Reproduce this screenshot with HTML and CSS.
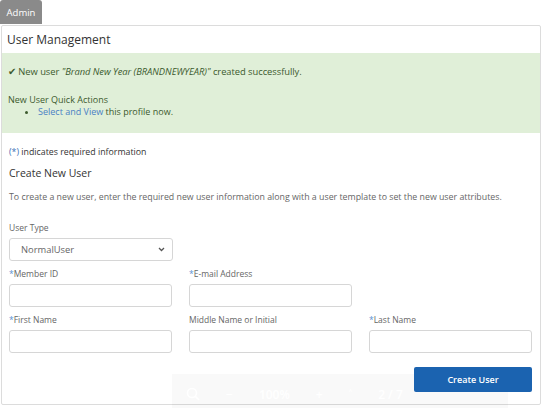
FILE: index.html
```html
<!DOCTYPE html>
<html>
<head>
<meta charset="utf-8">
<link rel="stylesheet" href="styles.css">
</head>
<body>
<div class="page">
  <div class="tab">Admin</div>
  <div class="panel">
    <div class="panel-head">User Management</div>
    <div class="alert">
      <p class="msg"><span class="check">&#10004;</span> New user <em>"Brand New Year (BRANDNEWYEAR)"</em> created successfully.</p>
      <p class="qa-title">New User Quick Actions</p>
      <ul class="qa-list">
        <li><a class="link">Select and View</a> this profile now.</li>
      </ul>
    </div>
    <div class="body">
      <p class="req"><span class="blue">(*)</span> indicates required information</p>
      <h2 class="sub">Create New User</h2>
      <p class="desc">To create a new user, enter the required new user information along with a user template to set the new user attributes.</p>
      <div class="field type-field">
        <label class="lbl">User Type</label>
        <div class="select"><span>NormalUser</span>
          <svg class="chev" width="7" height="5" viewBox="0 0 7 5"><path d="M1 1 L3.5 3.5 L6 1" fill="none" stroke="#555" stroke-width="1.3"/></svg>
        </div>
      </div>
      <div class="grid">
        <div class="field"><label class="lbl"><span class="star">*</span>Member ID</label><div class="input"></div></div>
        <div class="field"><label class="lbl"><span class="star">*</span>E-mail Address</label><div class="input"></div></div>
        <div></div>
        <div class="field"><label class="lbl"><span class="star">*</span>First Name</label><div class="input"></div></div>
        <div class="field"><label class="lbl">Middle Name or Initial</label><div class="input"></div></div>
        <div class="field"><label class="lbl"><span class="star">*</span>Last Name</label><div class="input"></div></div>
      </div>
      <div class="actions"><button class="btn">Create User</button></div>
    </div>
  </div>
  <div class="toolbar">
    <svg width="14" height="14" viewBox="0 0 14 14"><circle cx="6" cy="6" r="4.5" fill="none" stroke="#fff" stroke-width="1.6"/><path d="M9.5 9.5 L13 13" stroke="#fff" stroke-width="1.6"/></svg>
    <span>&minus;</span><span>100%</span><span>+</span><span>&#708;</span><span>2 / 7</span><span>&#709;</span>
  </div>
</div>
</body>
</html>
```
FILE: styles.css
```css
* { box-sizing: border-box; }
html, body { margin: 0; padding: 0; background: #fff; }
body { font-family: "Open Sans", "Noto Sans", sans-serif; color: #333; }
.page { position: relative; width: 545px; height: 408px; overflow: hidden; }
.tab {
  width: 42px; height: 24px;
  background: #8a8a8a; color: #fff;
  font-size: 9.5px; font-weight: 400;
  display: flex; align-items: center; justify-content: center;
  border-radius: 3px 3px 0 0;
}
.panel {
  margin: 1px 0 0 1px; width: 540px; height: 380px;
  border: 1px solid #dcdcdc; border-radius: 2px;
}
.panel-head {
  height: 27px; padding: 0 0 0 5px;
  display: flex; align-items: center;
  font-size: 12px; color: #333;
}
.alert {
  background: #e0efd8; height: 80px;
  padding: 12px 6px 0 6px; color: #3c5a2e;
  font-size: 9px;
}
.alert p { margin: 0; }
.msg { line-height: 12px; font-size: 9.4px; letter-spacing: -0.05px; }
.check { color: #3c5a2e; font-size: 10px; }
.qa-title { margin-top: 16px !important; line-height: 12px; }
.qa-list { margin: 0; padding-left: 30px; line-height: 12px; }
.link { color: #4a7fc4; }
.body { padding: 13px 8px 0 7px; font-size: 8.8px; }
.req { margin: 0; line-height: 12px; color: #333; }
.blue { color: #3b6fb6; }
.sub { margin: 9px 0 0; font-size: 10.5px; font-weight: 400; line-height: 13px; color: #333; }
.desc { margin: 11px 0 0; color: #666; line-height: 12px; }
.field { display: flex; flex-direction: column; }
.type-field { margin-top: 19px; width: 164px; }
.lbl { color: #666; line-height: 12px; margin-bottom: 4px; font-size: 8.5px; }
.star { color: #5b8fd0; }
.select {
  height: 23px; border: 1px solid #d6d6d6; border-radius: 3px;
  display: flex; align-items: center; justify-content: space-between;
  padding: 0 7px 0 11px; color: #666; font-size: 9.4px;
}
.grid {
  display: grid; grid-template-columns: 163px 163px 163px;
  column-gap: 17px; row-gap: 7px; margin-top: 7px;
}
.input { height: 23px; border: 1px solid #d6d6d6; border-radius: 3px; }
.actions { display: flex; justify-content: flex-end; margin-top: 14px; padding-right: 0; }
.btn {
  position: relative; z-index: 2;
  width: 118px; height: 25px; border: none; border-radius: 2px;
  background: #1b63b0; color: #fff;
  font-family: "Open Sans", "Noto Sans", sans-serif; font-size: 9px; font-weight: 600;
}
.toolbar {
  position: absolute; z-index: 1; left: 172px; top: 374px; width: 336px; height: 34px;
  background: rgba(0,0,0,0.025);
  display: flex; align-items: center; gap: 26px; padding: 6px 0 0 14px;
  color: #fff; font-size: 12px; font-weight: 600;
}
```
